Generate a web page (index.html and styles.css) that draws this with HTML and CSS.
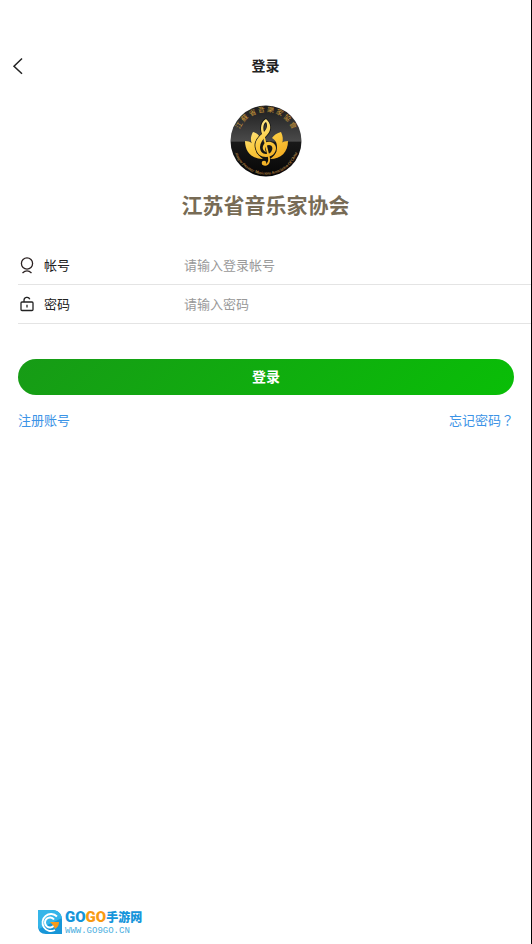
FILE: index.html
```html
<!DOCTYPE html>
<html lang="zh-CN">
<head>
    <meta charset="UTF-8">
    <meta name="viewport" content="width=device-width, initial-scale=1.0">
    <title>登录</title>
    <link rel="stylesheet" href="styles.css">
</head>
<body>
    <div class="page">
        <header class="header">
            <button type="button" class="back-btn" aria-label="返回">
                <svg width="12" height="18" viewBox="0 0 12 18" fill="none" stroke="#222" stroke-width="1.5">
                    <path d="M10 1.5 2 9.2l8 7.6"/>
                </svg>
            </button>
            <h1>登录</h1>
        </header>

        <div class="brand">
            <svg class="brand-logo" viewBox="0 0 72 72" aria-hidden="true">
                <defs>
                    <linearGradient id="disc" x1="0" y1="0" x2="0" y2="1">
                        <stop offset="0" stop-color="#1c1c1c"/>
                        <stop offset=".5" stop-color="#4a4a4a"/>
                        <stop offset=".52" stop-color="#181818"/>
                        <stop offset="1" stop-color="#060606"/>
                    </linearGradient>
                    <linearGradient id="gold" gradientUnits="userSpaceOnUse" x1="20" y1="14" x2="48" y2="60">
                        <stop offset="0" stop-color="#fff0a0"/>
                        <stop offset=".5" stop-color="#fbcb40"/>
                        <stop offset="1" stop-color="#f0a51c"/>
                    </linearGradient>
                    <path id="arc-top" d="M8.5 28A28.5 28.5 0 0 1 63.5 28"/>
                    <path id="arc-bottom" d="M3 40A33.2 33.2 0 0 0 69 40"/>
                </defs>
                <circle cx="36" cy="36" r="35.5" fill="url(#disc)"/>
                <g fill="url(#gold)">
                    <path d="M23 27c4 1 6 3 7 6-3 4-4 8-3 12-6-4-8-11-4-18z"/>
                    <path d="M51 27c-4 1-7 3-9 6 5 3 6 8 4 13 6-4 9-11 5-19z"/>
                    <path d="M15 36c6 0 9 3 11 9 1 4 4 7 7 9-11 0-18-7-18-18z"/>
                    <path d="M58 36c-6 0-9 3-11 9-1 4-4 7-7 9 11 0 18-7 18-18z"/>
                </g>
                <path d="M36 14c-5 3-6 9-4 15-5 4-8 9-6 15 1 5 5 8 10 8 6 0 10-4 10-9s-7-8-11-5c-4 4-2 8 1 9-2-4 0-7 3-7s4 3 3 5c-1 3-3 4-6 4-4 0-6-3-6-7s3-8 7-12c5-5 4-12-1-16zm0 3c2 3 1 7-2 10-1-4-1-8 2-10z" fill="url(#gold)" fill-rule="evenodd" stroke="#171717" stroke-width="1.6" paint-order="stroke"/>
                <path d="m33 28 6 25c1 6-3 8-6 6" fill="none" stroke="url(#gold)" stroke-width="1.8"/>
                <circle cx="34" cy="58" r="2.3" fill="#f3b42a"/>
                <text class="seal-name"><textPath href="#arc-top" startOffset="50%">江 蘇 省 音 樂 家 協 會</textPath></text>
                <text class="seal-latin"><textPath href="#arc-bottom" startOffset="50%">Jiangsu Province Musicians Association Of China</textPath></text>
            </svg>
            <h2>江苏省音乐家协会</h2>
        </div>

        <form class="login-form">
            <div class="field">
                <svg width="18" height="18" viewBox="0 0 18 18" fill="none" stroke="#2b2222" stroke-width="1.3">
                    <circle cx="9" cy="7.5" r="5.6"/>
                    <path d="M4.5 17c1.5-1.500 3-2.200 4.500-2.200s3 .7 4.500 2.200"/>
                </svg>
                <label for="account">帐号</label>
                <input type="text" id="account" name="account" placeholder="请输入登录帐号">
            </div>
            <div class="field">
                <svg width="18" height="18" viewBox="0 0 18 18" fill="none" stroke="#222" stroke-width="1.3">
                    <rect x="3" y="7" width="12" height="8.5" rx="1"/>
                    <path d="M6 7V5.500a3 3 0 0 1 5.800-1.200M9 9.800v2.800"/>
                </svg>
                <label for="password">密码</label>
                <input type="password" id="password" name="password" placeholder="请输入密码">
            </div>
            <button type="submit" class="login-btn">登录</button>
            <div class="links">
                <a href="#">注册账号</a>
                <a href="#" class="forgot">忘记密码？</a>
            </div>
        </form>

        <footer class="footer">
            <svg width="24" height="24" viewBox="0 0 24 24" aria-hidden="true">
                <path d="M0 0h14c6 0 10 4 10 10v14H8c-5 0-8-3-8-8z" fill="#1796d8"/>
                <path d="M0 0h14c5 0 9 3 10 8L1 19 0 16z" fill="#35b5e9"/>
                <path d="M19 6.500A8.500 8.500 0 1 0 17 20" fill="none" stroke="#fff" stroke-width="1.800"/>
                <path d="M16 9.500a5 5 0 1 0 0 6" fill="none" stroke="#fff" stroke-width="2"/>
                <path d="M12 12h9c0 3-1 5-4 7l-2-4z" fill="#f79a1c"/>
            </svg>
            <div class="site">
                <div class="site-name"><span class="go-blue">GO</span><span class="go-orange">GO</span><span class="site-cn">手游网</span></div>
                <div class="site-url">WWW.GO9GO.CN</div>
            </div>
        </footer>
    </div>
</body>
</html>
```
FILE: styles.css
```css
* {
    box-sizing: border-box;
}

body {
    margin: 0;
    font-family: "Noto Sans CJK SC", sans-serif;
    font-size: 13px;
    color: #222;
    background-color: #fff;
}

.page {
    display: flex;
    flex-direction: column;
    min-height: 100vh;
    padding-top: 48px;
    border-right: 1px solid #000;
}

.header {
    display: grid;
    grid-template-columns: 36px 1fr 36px;
    align-items: center;
    height: 36px;
}

.header h1 {
    margin: 0;
    padding-bottom: 2px;
    font-size: 14px;
    line-height: 20px;
    text-align: center;
}

.back-btn {
    display: flex;
    align-items: center;
    height: 36px;
    padding: 0 12px;
    border: none;
    background: none;
    cursor: pointer;
}

.brand {
    display: flex;
    flex-direction: column;
    align-items: center;
    padding-top: 21px;
}

.brand-logo {
    width: 72px;
    height: 72px;
}

.brand h2 {
    margin: 11px 0 0;
    font-size: 21px;
    line-height: 32px;
    color: #776b55;
}

.seal-name {
    font-family: "Noto Sans CJK TC", sans-serif;
    font-size: 7px;
    fill: #c8973a;
    text-anchor: middle;
}

.seal-latin {
    font-family: "Liberation Serif", serif;
    font-size: 4px;
    font-style: italic;
    fill: #e2b45c;
    text-anchor: middle;
}

.login-form {
    padding: 26px 0 0 18px;
}

.field {
    display: flex;
    align-items: center;
    height: 39px;
    border-bottom: 1px solid #e4e4e4;
}

.field label {
    width: 140px;
    margin-left: 8px;
    padding-bottom: 2px;
}

.field input {
    flex: 1;
    min-width: 0;
    height: 36px;
    padding: 0 0 2px;
    border: none;
    outline: none;
    background: none;
    font: inherit;
}

.field input::placeholder {
    color: #999;
}

.login-btn {
    display: block;
    width: calc(100% - 17px);
    height: 36px;
    margin-top: 35px;
    padding: 0 0 2px;
    border: none;
    border-radius: 18px;
    background: linear-gradient(135deg, #179b16, #09be07);
    font-family: inherit;
    font-size: 14px;
    font-weight: bold;
    color: #fff;
    cursor: pointer;
}

.links {
    display: flex;
    justify-content: space-between;
    padding: 15px 17px 0 0;
    line-height: 20px;
}

.links a {
    color: #3b93e6;
    text-decoration: none;
}

/* centred full-width question mark */
.links .forgot {
    font-family: "Noto Sans CJK TC", sans-serif;
    font-feature-settings: "locl" 0;
}

.footer {
    display: flex;
    align-items: center;
    gap: 3px;
    margin-top: auto;
    padding: 0 0 8px 38px;
}

.site-name {
    display: flex;
    align-items: center;
    height: 18px;
    font-family: Roboto, sans-serif;
    font-size: 15px;
    font-weight: 900;
    line-height: 18px;
}

.go-blue {
    color: #1595db;
}

.go-orange {
    color: #f99a12;
}

.site-cn {
    font-family: "Noto Sans CJK SC", sans-serif;
    font-size: 12px;
    color: #1595db;
}

.site-url {
    font-family: "Liberation Mono", monospace;
    font-size: 9px;
    line-height: 10px;
    color: #4aaee0;
}
```
